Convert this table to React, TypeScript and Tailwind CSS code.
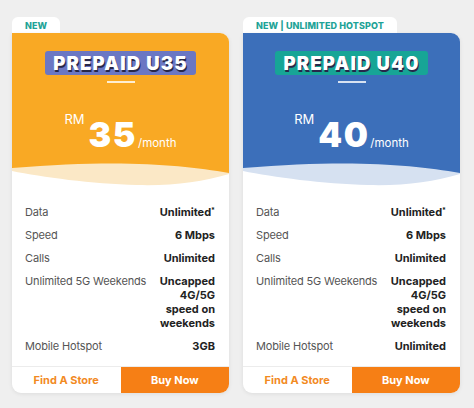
import React from "react";

type Plan = {
  tab: string;
  title: string;
  price: string;
  headerBg: string;
  badgeBg: string;
  waveLight: string;
  waveMain: string;
  hotspot: string;
};

const plans: Plan[] = [
  {
    tab: "NEW",
    title: "PREPAID U35",
    price: "35",
    headerBg: "bg-[#f9a924]",
    badgeBg: "bg-[#6b77c3]",
    waveLight: "#fbe8c6",
    waveMain: "#f9a924",
    hotspot: "3GB",
  },
  {
    tab: "NEW | UNLIMITED HOTSPOT",
    title: "PREPAID U40",
    price: "40",
    headerBg: "bg-[#3c6fba]",
    badgeBg: "bg-[#17a596]",
    waveLight: "#d6e1f1",
    waveMain: "#3c6fba",
    hotspot: "Unlimited",
  },
];

function Row({ label, children }: { label: string; children: React.ReactNode }) {
  return (
    <div className="flex justify-between items-start leading-[14px]">
      <span className="text-[11px] tracking-[-0.15px] text-[#555]">{label}</span>
      <span className="text-[11px] font-bold text-[#222] text-right max-w-[60px]">{children}</span>
    </div>
  );
}

function Card({ p }: { p: Plan }) {
  return (
    <div className="w-[217px] flex flex-col">
      <div className="self-start h-[16px] bg-white rounded-t-[6px] px-[13px] flex items-center">
        <span className="text-[9px] font-extrabold text-[#1ea397] leading-none tracking-[0.1px]">{p.tab}</span>
      </div>
      <div className="bg-white rounded-tr-[9px] rounded-b-[9px] overflow-hidden shadow-[0_1px_4px_rgba(0,0,0,0.08)]">
        <div className={`${p.headerBg} h-[127px] flex flex-col items-center pt-[18px]`}>
          <div className={`${p.badgeBg} h-[24px] px-[8px] rounded-[3px] flex items-center`}>
            <span className="text-white font-black text-[18.5px] leading-none tracking-[1.2px] [text-shadow:1px_2px_0_#27284a]">
              {p.title}
            </span>
          </div>
          <div className="mt-[6px] w-[28px] h-[2px] bg-white/80" />
          <div className="mt-[35px] flex text-white">
            <span className="self-start -mt-[5px] text-[13px] leading-none mr-[4px]">RM</span>
            <span className="text-[34px] font-black leading-none tracking-[1.5px]">{p.price}</span>
            <span className="self-end mb-[3px] ml-[1px] text-[11.5px] leading-none">/month</span>
          </div>
        </div>
        <svg width="217" height="26" viewBox="0 0 217 26" className="block">
          <rect width="217" height="26" fill="#ffffff" />
          <path d="M0 0 H217 V14 C190 22 160 26 125 25 C80 24 30 17 0 11 Z" fill={p.waveLight} />
          <path d="M0 0 H217 V13 C170 5 110 -1 0 8 Z" fill={p.waveMain} />
        </svg>
        <div className="pt-[19px] pb-[13px] pl-[13px] pr-[14px] flex flex-col gap-[9px]">
          <Row label="Data">
            Unlimited<sup className="text-[7px] font-bold">*</sup>
          </Row>
          <Row label="Speed">6 Mbps</Row>
          <Row label="Calls">Unlimited</Row>
          <Row label="Unlimited 5G Weekends">Uncapped 4G/5G speed on weekends</Row>
          <Row label="Mobile Hotspot">{p.hotspot}</Row>
        </div>
        <div className="grid grid-cols-2 h-[27px] border-t border-[#ececec]">
          <div className="flex items-center justify-center text-[11px] font-bold text-[#f28a1f]">Find A Store</div>
          <div className="flex items-center justify-center text-[11px] font-bold text-white bg-[#f67f15]">Buy Now</div>
        </div>
      </div>
    </div>
  );
}

export default function App() {
  return (
    <div
      className="w-[474px] h-[408px] bg-[#efefef] flex gap-[14px] pl-[12px] pt-[17px]"
      style={{ fontFamily: "Inter, 'Noto Sans', sans-serif" }}
    >
      {plans.map((p) => (
        <Card key={p.title} p={p} />
      ))}
    </div>
  );
}
